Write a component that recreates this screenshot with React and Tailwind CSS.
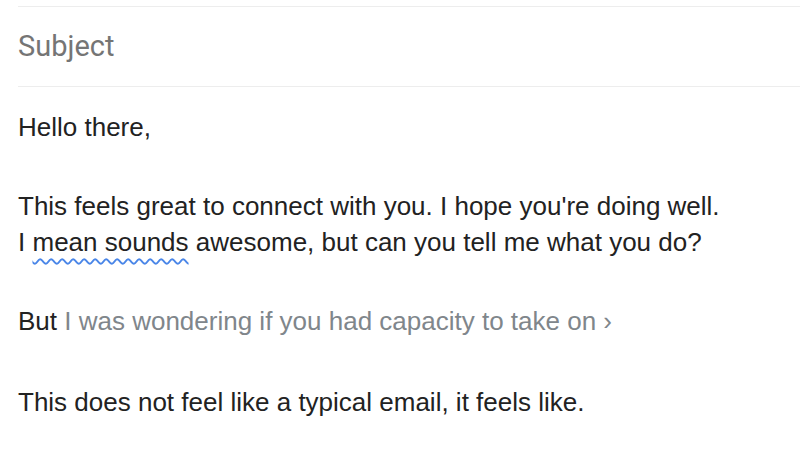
import React from 'react';

// Compose body of a mail draft
const App = () => {
  return (
    <div className="min-h-screen bg-white pt-[6px] pl-[18px]">
      <div className="border-t border-b border-[#ededed] h-[81px] flex items-center">
        <span className="text-[29px] text-[#757575] font-['Roboto',sans-serif] leading-none">Subject</span>
      </div>
      <div className="pt-[22px] flex flex-col gap-[43px] text-[26px] leading-[36px] text-[#222222] font-['Liberation_Sans',Arial,sans-serif]">
        <p>Hello there,</p>
        <p>
          This feels great to connect with you. I hope you're doing well.
          <br />
          I{' '}
          <span className="underline decoration-wavy decoration-[#4a86e8] decoration-[1.5px] underline-offset-[7px]">
            mean sounds
          </span>{' '}
          awesome, but can you tell me what you do?
        </p>
        <p>
          But <span className="text-[#80868b]">I was wondering if you had capacity to take on ›</span>
        </p>
        <p className="mt-[2px]">This does not feel like a typical email, it feels like.</p>
      </div>
    </div>
  );
};

export default App;
